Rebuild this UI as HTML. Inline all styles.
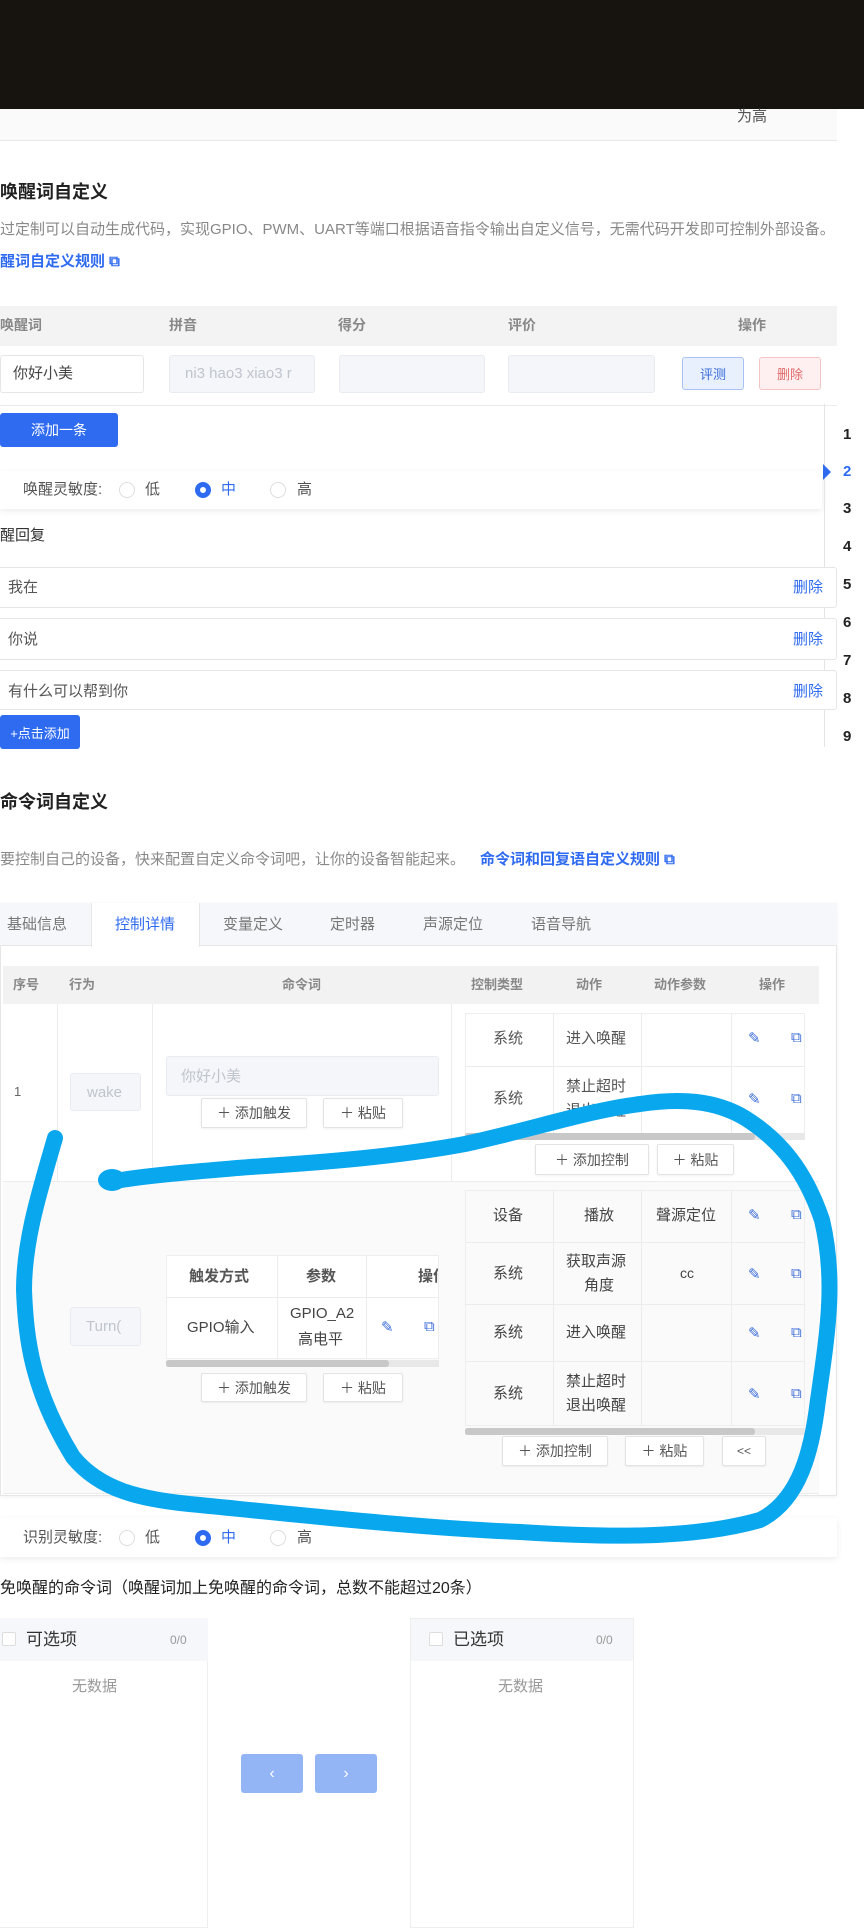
<!DOCTYPE html>
<html><head><meta charset="utf-8"><style>
*{box-sizing:border-box;margin:0;padding:0}
body{width:864px;height:1920px;overflow:hidden;background:#fff;position:relative;font-family:"Liberation Sans","Noto Sans CJK SC",sans-serif;color:#333;font-size:15px}
.a{position:absolute}
.t{position:absolute;white-space:nowrap;line-height:1}
.g{color:#888}
.b{color:#2f6bf0}
.box{position:absolute;border:1px solid #e6e6e6;border-radius:3px;background:#fff}
.dis{position:absolute;background:#f4f6fa;border:1px solid #e8ebf0;border-radius:3px}
.btn{position:absolute;border:1px solid #e3e3e3;background:#fff;border-radius:2px;font-size:14px;color:#555;display:flex;align-items:center;justify-content:center;box-shadow:0 1px 2px rgba(0,0,0,.06)}
.pb{position:absolute;background:#2f6bf0;color:#fff;border-radius:3px;display:flex;align-items:center;justify-content:center;font-size:14px}
.radio{position:absolute;width:16px;height:16px;border-radius:50%;border:1px solid #ddd}
.on{border:5px solid #2f6bf0;background:#fff}
.ic{position:absolute;color:#3a6bd8;font-size:15px}
.hl{position:absolute;height:1px;background:#ececec}
.vl{position:absolute;width:1px;background:#ececec}
</style></head><body>
<div class="a" style="left:0;top:0;width:864px;height:109px;background:#17130e"></div>
<div class="a" style="left:0;top:109px;width:837px;height:32px;background:#fafafa;border-bottom:1px solid #e8e8e8"></div>
<div class="t" style="left:737px;top:109px;font-size:15px;color:#555">为高</div>

<div class="t" style="left:0;top:183px;font-size:18px;font-weight:bold;color:#222">唤醒词自定义</div>
<div class="t g" style="left:0;top:222px;font-size:15px">过定制可以自动生成代码，实现GPIO、PWM、UART等端口根据语音指令输出自定义信号，无需代码开发即可控制外部设备。</div>
<div class="t b" style="left:0;top:254px;font-size:15px;font-weight:bold">醒词自定义规则 ⧉</div>

<div class="a" style="left:0;top:306px;width:837px;height:40px;background:#f3f3f3"></div>
<div class="t g" style="left:0;top:318px;font-size:14px;font-weight:bold">唤醒词</div>
<div class="t g" style="left:169px;top:318px;font-size:14px;font-weight:bold">拼音</div>
<div class="t g" style="left:338px;top:318px;font-size:14px;font-weight:bold">得分</div>
<div class="t g" style="left:508px;top:318px;font-size:14px;font-weight:bold">评价</div>
<div class="t g" style="left:738px;top:318px;font-size:14px;font-weight:bold">操作</div>
<div class="hl" style="left:0;top:405px;width:837px"></div>
<div class="box" style="left:0;top:355px;width:144px;height:38px"></div>
<div class="t" style="left:13px;top:366px;font-size:15px;color:#444">你好小美</div>
<div class="dis" style="left:169px;top:355px;width:146px;height:38px"></div>
<div class="t" style="left:185px;top:366px;font-size:15px;color:#c0c4cc">ni3 hao3 xiao3 r</div>
<div class="dis" style="left:339px;top:355px;width:146px;height:38px"></div>
<div class="dis" style="left:508px;top:355px;width:147px;height:38px"></div>
<div class="a" style="left:682px;top:357px;width:62px;height:33px;background:#e8f0fe;border:1px solid #a9c2f3;border-radius:3px;color:#3a6bd8;font-size:13px;display:flex;align-items:center;justify-content:center">评测</div>
<div class="a" style="left:759px;top:357px;width:62px;height:33px;background:#fef0f0;border:1px solid #f5c5c5;border-radius:3px;color:#e46a6a;font-size:13px;display:flex;align-items:center;justify-content:center">删除</div>

<div class="pb" style="left:0;top:413px;width:118px;height:34px">添加一条</div>

<div class="a" style="left:0;top:471px;width:822px;height:38px;background:#fff;box-shadow:0 2px 6px rgba(0,0,0,.08)"></div>
<div class="t" style="left:23px;top:482px;font-size:15px;color:#555">唤醒灵敏度:</div>
<div class="radio" style="left:119px;top:482px"></div><div class="t" style="left:145px;top:482px;font-size:15px;color:#555">低</div>
<div class="radio on" style="left:195px;top:482px"></div><div class="t b" style="left:221px;top:482px;font-size:15px">中</div>
<div class="radio" style="left:270px;top:482px"></div><div class="t" style="left:297px;top:482px;font-size:15px;color:#555">高</div>

<!-- right nav -->
<div class="vl" style="left:824px;top:404px;height:343px;background:#e4e4e4"></div>
<div class="a" style="left:823px;top:464px;width:0;height:0;border-top:8px solid transparent;border-bottom:8px solid transparent;border-left:8px solid #2f6bf0"></div>
<div class="t" style="left:843px;top:427px;font-size:15px;font-weight:bold;color:#222">1</div>
<div class="t b" style="left:843px;top:464px;font-size:15px;font-weight:bold">2</div>
<div class="t" style="left:843px;top:501px;font-size:15px;font-weight:bold;color:#222">3</div>
<div class="t" style="left:843px;top:539px;font-size:15px;font-weight:bold;color:#222">4</div>
<div class="t" style="left:843px;top:577px;font-size:15px;font-weight:bold;color:#222">5</div>
<div class="t" style="left:843px;top:615px;font-size:15px;font-weight:bold;color:#222">6</div>
<div class="t" style="left:843px;top:653px;font-size:15px;font-weight:bold;color:#222">7</div>
<div class="t" style="left:843px;top:691px;font-size:15px;font-weight:bold;color:#222">8</div>
<div class="t" style="left:843px;top:729px;font-size:15px;font-weight:bold;color:#222">9</div>

<div class="t" style="left:0;top:528px;font-size:15px;color:#333">醒回复</div>
<div class="box" style="left:-2px;top:567px;width:839px;height:41px"></div>
<div class="t" style="left:8px;top:580px;color:#555">我在</div>
<div class="t b" style="left:793px;top:580px;font-size:15px">删除</div>
<div class="box" style="left:-2px;top:618px;width:839px;height:42px"></div>
<div class="t" style="left:8px;top:632px;color:#555">你说</div>
<div class="t b" style="left:793px;top:632px;font-size:15px">删除</div>
<div class="box" style="left:-2px;top:670px;width:839px;height:40px"></div>
<div class="t" style="left:8px;top:684px;color:#555">有什么可以帮到你</div>
<div class="t b" style="left:793px;top:684px;font-size:15px">删除</div>
<div class="pb" style="left:0;top:715px;width:80px;height:34px;font-size:13px">+点击添加</div>

<div class="t" style="left:0;top:793px;font-size:18px;font-weight:bold;color:#222">命令词自定义</div>
<div class="t g" style="left:0;top:852px;font-size:15px">要控制自己的设备，快来配置自定义命令词吧，让你的设备智能起来。</div>
<div class="t b" style="left:480px;top:852px;font-size:15px;font-weight:bold">命令词和回复语自定义规则 ⧉</div>

<!-- card -->
<div class="a" style="left:0;top:903px;width:837px;height:593px;border:1px solid #e6e6e6;background:#fff;box-shadow:0 1px 4px rgba(0,0,0,.06)"></div>
<div class="a" style="left:0;top:903px;width:837px;height:43px;background:#f5f7fa;border-bottom:1px solid #e6e6e6"></div>
<div class="a" style="left:91px;top:903px;width:109px;height:44px;background:#fff;border-left:1px solid #e6e6e6;border-right:1px solid #e6e6e6"></div>
<div class="t" style="left:7px;top:917px;color:#777">基础信息</div>
<div class="t b" style="left:115px;top:917px">控制详情</div>
<div class="t" style="left:223px;top:917px;color:#777">变量定义</div>
<div class="t" style="left:330px;top:917px;color:#777">定时器</div>
<div class="t" style="left:423px;top:917px;color:#777">声源定位</div>
<div class="t" style="left:531px;top:917px;color:#777">语音导航</div>

<div class="a" style="left:3px;top:966px;width:816px;height:38px;background:#f2f2f2"></div>
<div class="t g" style="left:13px;top:978px;font-size:13px;font-weight:bold">序号</div>
<div class="t g" style="left:69px;top:978px;font-size:13px;font-weight:bold">行为</div>
<div class="t g" style="left:282px;top:978px;font-size:13px;font-weight:bold">命令词</div>
<div class="t g" style="left:471px;top:978px;font-size:13px;font-weight:bold">控制类型</div>
<div class="t g" style="left:576px;top:978px;font-size:13px;font-weight:bold">动作</div>
<div class="t g" style="left:654px;top:978px;font-size:13px;font-weight:bold">动作参数</div>
<div class="t g" style="left:759px;top:978px;font-size:13px;font-weight:bold">操作</div>

<div class="vl" style="left:57px;top:1004px;height:490px"></div>
<div class="vl" style="left:152px;top:1004px;height:490px"></div>
<div class="vl" style="left:451px;top:1004px;height:490px"></div>
<div class="a" style="left:3px;top:1181px;width:816px;height:312px;background:#fafafa"></div>
<div class="hl" style="left:3px;top:1181px;width:816px"></div>
<div class="hl" style="left:3px;top:1493px;width:816px"></div>

<div class="t" style="left:14px;top:1085px;font-size:13px;color:#666">1</div>
<div class="dis" style="left:70px;top:1073px;width:71px;height:38px"></div>
<div class="t" style="left:87px;top:1085px;font-size:15px;color:#c0c4cc">wake</div>
<div class="dis" style="left:166px;top:1056px;width:273px;height:40px"></div>
<div class="t" style="left:181px;top:1069px;font-size:15px;color:#c0c4cc">你好小美</div>
<div class="btn" style="left:201px;top:1098px;width:106px;height:30px">＋ 添加触发</div>
<div class="btn" style="left:323px;top:1098px;width:80px;height:30px">＋ 粘贴</div>

<!-- control sub row1 -->
<div class="a" style="left:465px;top:1013px;width:340px;height:123px;background:#fff;border:1px solid #eee"></div>
<div class="hl" style="left:465px;top:1066px;width:340px"></div>
<div class="vl" style="left:553px;top:1013px;height:123px"></div>
<div class="vl" style="left:641px;top:1013px;height:123px"></div>
<div class="vl" style="left:731px;top:1013px;height:123px"></div>
<div class="t" style="left:493px;top:1031px;color:#555">系统</div>
<div class="t" style="left:566px;top:1031px;color:#555">进入唤醒</div>
<div class="t" style="left:493px;top:1091px;color:#555">系统</div>
<div class="t" style="left:566px;top:1079px;color:#555">禁止超时</div>
<div class="t" style="left:566px;top:1103px;color:#555">退出唤醒</div>
<div class="ic" style="left:748px;top:1029px">✎</div><div class="ic" style="left:791px;top:1029px">⧉</div>
<div class="ic" style="left:748px;top:1090px">✎</div><div class="ic" style="left:791px;top:1090px">⧉</div>
<div class="a" style="left:465px;top:1133px;width:340px;height:7px;background:#e8e8e8"></div>
<div class="a" style="left:465px;top:1133px;width:290px;height:7px;background:#c8c8c8;border-radius:3px"></div>
<div class="btn" style="left:535px;top:1144px;width:114px;height:31px">＋ 添加控制</div>
<div class="btn" style="left:657px;top:1144px;width:77px;height:31px">＋ 粘贴</div>

<!-- row2 -->
<div class="dis" style="left:70px;top:1307px;width:71px;height:39px"></div>
<div class="t" style="left:86px;top:1319px;font-size:15px;color:#c0c4cc">Turn(</div>
<div class="a" style="left:166px;top:1255px;width:273px;height:104px;background:#fff;border:1px solid #eee;overflow:hidden">
<div class="t" style="left:251px;top:13px;font-size:15px;color:#555;font-weight:bold">操作</div>
</div>
<div class="hl" style="left:166px;top:1297px;width:273px"></div>
<div class="vl" style="left:277px;top:1255px;height:104px"></div>
<div class="vl" style="left:366px;top:1255px;height:104px"></div>
<div class="t" style="left:189px;top:1269px;font-size:15px;color:#555;font-weight:bold">触发方式</div>
<div class="t" style="left:306px;top:1269px;font-size:15px;color:#555;font-weight:bold">参数</div>
<div class="t" style="left:187px;top:1320px;color:#444">GPIO输入</div>
<div class="t" style="left:290px;top:1306px;color:#444">GPIO_A2</div>
<div class="t" style="left:298px;top:1332px;color:#444">高电平</div>
<div class="ic" style="left:381px;top:1318px">✎</div><div class="ic" style="left:424px;top:1318px">⧉</div>
<div class="a" style="left:166px;top:1360px;width:273px;height:7px;background:#e8e8e8"></div>
<div class="a" style="left:166px;top:1360px;width:223px;height:7px;background:#c8c8c8;border-radius:3px"></div>
<div class="btn" style="left:201px;top:1373px;width:106px;height:29px">＋ 添加触发</div>
<div class="btn" style="left:323px;top:1373px;width:80px;height:29px">＋ 粘贴</div>

<div class="a" style="left:465px;top:1190px;width:340px;height:236px;background:#fafafa;border:1px solid #eee"></div>
<div class="hl" style="left:465px;top:1242px;width:340px"></div>
<div class="hl" style="left:465px;top:1304px;width:340px"></div>
<div class="hl" style="left:465px;top:1361px;width:340px"></div>
<div class="vl" style="left:553px;top:1190px;height:236px"></div>
<div class="vl" style="left:641px;top:1190px;height:236px"></div>
<div class="vl" style="left:731px;top:1190px;height:236px"></div>
<div class="t" style="left:493px;top:1208px;color:#444">设备</div>
<div class="t" style="left:584px;top:1208px;color:#444">播放</div>
<div class="t" style="left:656px;top:1208px;color:#444">聲源定位</div>
<div class="t" style="left:493px;top:1266px;color:#444">系统</div>
<div class="t" style="left:566px;top:1254px;color:#444">获取声源</div>
<div class="t" style="left:584px;top:1278px;color:#444">角度</div>
<div class="t" style="left:680px;top:1266px;font-size:14px;color:#444">cc</div>
<div class="t" style="left:493px;top:1325px;color:#444">系统</div>
<div class="t" style="left:566px;top:1325px;color:#444">进入唤醒</div>
<div class="t" style="left:493px;top:1386px;color:#444">系统</div>
<div class="t" style="left:566px;top:1374px;color:#444">禁止超时</div>
<div class="t" style="left:566px;top:1398px;color:#444">退出唤醒</div>
<div class="ic" style="left:748px;top:1206px">✎</div><div class="ic" style="left:791px;top:1206px">⧉</div>
<div class="ic" style="left:748px;top:1265px">✎</div><div class="ic" style="left:791px;top:1265px">⧉</div>
<div class="ic" style="left:748px;top:1324px">✎</div><div class="ic" style="left:791px;top:1324px">⧉</div>
<div class="ic" style="left:748px;top:1385px">✎</div><div class="ic" style="left:791px;top:1385px">⧉</div>
<div class="a" style="left:465px;top:1428px;width:340px;height:7px;background:#e8e8e8"></div>
<div class="a" style="left:465px;top:1428px;width:290px;height:7px;background:#c8c8c8;border-radius:3px"></div>
<div class="btn" style="left:502px;top:1436px;width:106px;height:30px">＋ 添加控制</div>
<div class="btn" style="left:625px;top:1436px;width:79px;height:30px">＋ 粘贴</div>
<div class="btn" style="left:722px;top:1436px;width:44px;height:30px;font-size:12px">&lt;&lt;</div>

<div class="a" style="left:0;top:1518px;width:837px;height:39px;background:#fff;box-shadow:0 2px 6px rgba(0,0,0,.08)"></div>
<div class="t" style="left:23px;top:1530px;font-size:15px;color:#555">识别灵敏度:</div>
<div class="radio" style="left:119px;top:1530px"></div><div class="t" style="left:145px;top:1530px;font-size:15px;color:#555">低</div>
<div class="radio on" style="left:195px;top:1530px"></div><div class="t b" style="left:221px;top:1530px;font-size:15px">中</div>
<div class="radio" style="left:270px;top:1530px"></div><div class="t" style="left:297px;top:1530px;font-size:15px;color:#555">高</div>

<div class="t" style="left:0;top:1581px;font-size:16px;color:#222">免唤醒的命令词（唤醒词加上免唤醒的命令词，总数不能超过20条）</div>

<div class="a" style="left:-1px;top:1618px;width:209px;height:310px;border:1px solid #eee"></div>
<div class="a" style="left:0;top:1618px;width:208px;height:43px;background:#f5f7fa"></div>
<div class="a" style="left:2px;top:1632px;width:14px;height:14px;border:1px solid #ddd;background:#fff;border-radius:2px"></div>
<div class="t" style="left:26px;top:1631px;font-size:17px;color:#333">可选项</div>
<div class="t" style="left:170px;top:1634px;font-size:12px;color:#999">0/0</div>
<div class="t" style="left:72px;top:1679px;font-size:15px;color:#999">无数据</div>
<div class="a" style="left:410px;top:1618px;width:224px;height:310px;border:1px solid #eee"></div>
<div class="a" style="left:411px;top:1619px;width:222px;height:42px;background:#f5f7fa"></div>
<div class="a" style="left:429px;top:1632px;width:14px;height:14px;border:1px solid #ddd;background:#fff;border-radius:2px"></div>
<div class="t" style="left:453px;top:1631px;font-size:17px;color:#333">已选项</div>
<div class="t" style="left:596px;top:1634px;font-size:12px;color:#999">0/0</div>
<div class="t" style="left:498px;top:1679px;font-size:15px;color:#999">无数据</div>
<div class="a" style="left:241px;top:1754px;width:62px;height:39px;background:#93b4f5;border-radius:3px;color:#fff;display:flex;align-items:center;justify-content:center;font-size:16px">‹</div>
<div class="a" style="left:315px;top:1754px;width:62px;height:39px;background:#93b4f5;border-radius:3px;color:#fff;display:flex;align-items:center;justify-content:center;font-size:16px">›</div>

<svg class="a" style="left:0;top:0" width="864" height="1920">
<path d="M55 1138 C40 1190 24 1240 24 1290 C26 1340 32 1390 73 1457 C100 1490 140 1500 200 1505 C300 1515 420 1528 520 1532 C600 1537 690 1540 760 1520 C800 1500 812 1450 818 1400 C828 1330 836 1280 822 1220 C805 1170 780 1140 745 1118 C715 1100 680 1098 640 1104 C590 1110 530 1130 465 1144 C400 1156 330 1162 250 1167 C190 1172 140 1176 110 1182" fill="none" stroke="#08a7ee" stroke-width="16" stroke-linecap="round" stroke-linejoin="round"/>
<ellipse cx="112" cy="1180" rx="14" ry="11" fill="#08a7ee"/>
</svg>
</body></html>
